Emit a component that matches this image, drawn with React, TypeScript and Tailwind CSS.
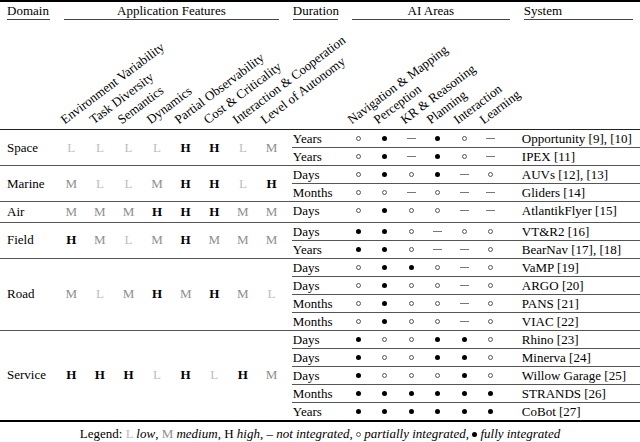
import React from "react";

type Lv = "L" | "M" | "H";
type S = "f" | "p" | "n";

const groups: { domain: string; feats: Lv[]; rows: { dur: string; ai: S[]; sys: string }[] }[] = [
  {
    domain: "Space",
    feats: ["L", "L", "L", "L", "H", "H", "L", "M"],
    rows: [
      { dur: "Years", ai: ["p", "f", "n", "f", "p", "n"], sys: "Opportunity [9], [10]" },
      { dur: "Years", ai: ["p", "f", "n", "f", "p", "n"], sys: "IPEX [11]" },
    ],
  },
  {
    domain: "Marine",
    feats: ["M", "L", "L", "M", "H", "H", "L", "H"],
    rows: [
      { dur: "Days", ai: ["p", "f", "p", "f", "n", "p"], sys: "AUVs [12], [13]" },
      { dur: "Months", ai: ["p", "p", "n", "p", "n", "n"], sys: "Gliders [14]" },
    ],
  },
  {
    domain: "Air",
    feats: ["M", "M", "M", "H", "H", "H", "M", "M"],
    rows: [{ dur: "Days", ai: ["p", "f", "p", "p", "n", "n"], sys: "AtlantikFlyer [15]" }],
  },
  {
    domain: "Field",
    feats: ["H", "M", "L", "M", "H", "M", "M", "M"],
    rows: [
      { dur: "Days", ai: ["f", "f", "p", "n", "p", "p"], sys: "VT&R2 [16]" },
      { dur: "Years", ai: ["f", "f", "p", "n", "n", "p"], sys: "BearNav [17], [18]" },
    ],
  },
  {
    domain: "Road",
    feats: ["M", "L", "M", "H", "M", "H", "M", "L"],
    rows: [
      { dur: "Days", ai: ["p", "f", "f", "p", "n", "p"], sys: "VaMP [19]" },
      { dur: "Days", ai: ["p", "f", "p", "p", "n", "p"], sys: "ARGO [20]" },
      { dur: "Months", ai: ["p", "f", "p", "p", "n", "p"], sys: "PANS [21]" },
      { dur: "Months", ai: ["p", "f", "p", "p", "n", "p"], sys: "VIAC [22]" },
    ],
  },
  {
    domain: "Service",
    feats: ["H", "H", "H", "L", "H", "L", "H", "M"],
    rows: [
      { dur: "Days", ai: ["f", "p", "p", "f", "f", "p"], sys: "Rhino [23]" },
      { dur: "Days", ai: ["f", "p", "p", "f", "f", "p"], sys: "Minerva [24]" },
      { dur: "Days", ai: ["f", "p", "p", "p", "f", "p"], sys: "Willow Garage [25]" },
      { dur: "Months", ai: ["f", "f", "f", "f", "f", "f"], sys: "STRANDS [26]" },
      { dur: "Years", ai: ["f", "f", "f", "f", "f", "f"], sys: "CoBot [27]" },
    ],
  },
];

const featLabels = [
  "Environment Variability",
  "Task Diversity",
  "Semantics",
  "Dynamics",
  "Partial Observability",
  "Cost & Criticality",
  "Interaction & Cooperation",
  "Level of Autonomy",
];
const aiLabels = ["Navigation & Mapping", "Perception", "KR & Reasoning", "Planning", "Interaction", "Learning"];

function Level({ v }: { v: Lv }) {
  if (v === "L") return <span className="text-[#bdbdbd]">L</span>;
  if (v === "M") return <span className="text-[#8e8e8e]">M</span>;
  return <span className="font-bold text-black">H</span>;
}

function Sym({ s }: { s: S }) {
  if (s === "f") return <span className="inline-block w-[5px] h-[5px] rounded-full bg-black" />;
  if (s === "p") return <span className="inline-block w-[5px] h-[5px] rounded-full border border-[#555]" />;
  return <span className="inline-block w-[9px] h-px bg-[#777]" />;
}

function RotLabel({ text, left }: { text: string; left: string }) {
  return (
    <div className="relative h-full">
      <span className={"absolute bottom-[3px] origin-bottom-left -rotate-[37deg] whitespace-nowrap leading-[13px] " + left}>
        {text}
      </span>
    </div>
  );
}

export default function App() {
  return (
    <div className="w-[640px] h-[442px] bg-white text-black text-[13px] font-[family-name:'Liberation_Serif',serif] overflow-hidden">
      <div className="h-[2px] bg-black" />
      <div className="grid grid-cols-[57px_228.8px_59px_172px_1fr] pt-[1px]">
        <div className="mx-[7px] h-[17px] leading-[15px] border-b border-[#444]">Domain</div>
        <div className="mx-[7px] h-[17px] leading-[15px] text-center border-b border-[#444]">Application Features</div>
        <div className="mx-[7px] h-[17px] leading-[15px] border-b border-[#444]">Duration</div>
        <div className="mx-[7px] h-[17px] leading-[15px] text-center border-b border-[#444]">AI Areas</div>
        <div className="mx-[7px] h-[17px] leading-[15px] border-b border-[#444]">System</div>
      </div>
      <div className="grid grid-cols-[57px_repeat(8,28.6px)_59px_repeat(6,26.5px)_1fr] h-[109px]">
        <div />
        {featLabels.map((t) => (
          <RotLabel key={t} text={t} left="left-[9px]" />
        ))}
        <div />
        {aiLabels.map((t) => (
          <RotLabel key={t} text={t} left="left-[8px]" />
        ))}
        <div />
      </div>
      <div className="h-px bg-[#222]" />
      {groups.map((g, gi) => (
        <div key={g.domain}>
          {gi > 0 && <div className="h-px bg-[#555]" />}
          <div className="flex">
            <div className="grid grid-cols-[57px_repeat(8,28.6px)] w-[285.8px] items-center">
              <div className="pl-[7px]">{g.domain}</div>
              {g.feats.map((f, i) => (
                <div key={i} className="text-center">
                  <Level v={f} />
                </div>
              ))}
            </div>
            <div className="flex-1 flex flex-col">
              {g.rows.map((r, ri) => (
                <div key={ri}>
                  {ri > 0 && <div className="h-px bg-[#555] ml-[6px]" />}
                  <div className="grid grid-cols-[59px_repeat(6,26.5px)_1fr] h-[17px] items-center leading-[15px]">
                    <div className="pl-[7px]">{r.dur}</div>
                    {r.ai.map((s, i) => (
                      <div key={i} className="flex justify-center items-center">
                        <Sym s={s} />
                      </div>
                    ))}
                    <div className="pl-[18px] whitespace-nowrap">{r.sys}</div>
                  </div>
                </div>
              ))}
            </div>
          </div>
        </div>
      ))}
      <div className="h-[2px] bg-black" />
      <div className="text-center leading-[15px] pt-[4px] whitespace-nowrap">
        Legend: <span className="text-[#bdbdbd]">L</span> <i>low</i>, <span className="text-[#8e8e8e]">M</span>{" "}
        <i>medium</i>, H <i>high</i>, – <i>not integrated</i>,{" "}
        <span className="inline-block w-[5px] h-[5px] rounded-full border border-[#555] align-middle" />{" "}
        <i>partially integrated</i>,{" "}
        <span className="inline-block w-[5px] h-[5px] rounded-full bg-black align-middle" /> <i>fully integrated</i>
      </div>
    </div>
  );
}
